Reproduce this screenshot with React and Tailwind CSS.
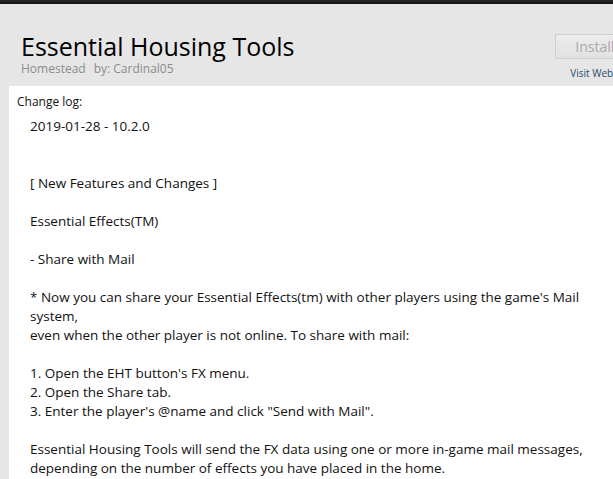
export default function App() {
  const lines = [
    "",
    "",
    "[ New Features and Changes ]",
    "",
    "Essential Effects(TM)",
    "",
    "- Share with Mail",
    "",
    "* Now you can share your Essential Effects(tm) with other players using the game's Mail system,",
    "even when the other player is not online. To share with mail:",
    "",
    "1. Open the EHT button's FX menu.",
    "2. Open the Share tab.",
    "3. Enter the player's @name and click \"Send with Mail\".",
    "",
    "Essential Housing Tools will send the FX data using one or more in-game mail messages,",
    "depending on the number of effects you have placed in the home.",
  ];
  return (
    <div className="w-[613px] h-[479px] overflow-hidden bg-[#e6e6e6] flex flex-col" style={{ fontFamily: '"Open Sans", sans-serif' }}>
      <div className="h-[4px] shrink-0 bg-gradient-to-b from-[#2a2a2a] to-[#111]" />
      <div className="flex shrink-0 h-[82px]">
        <div className="w-[555px] shrink-0 pl-[21px] pt-[28px]">
          <div className="text-[25px] leading-[29px] text-black">Essential Housing Tools</div>
          <div className="text-[12px] leading-[16px] text-[#8c8c8c] flex gap-[8px]">
            <span>Homestead</span>
            <span>by: Cardinal05</span>
          </div>
        </div>
        <div className="w-[90px] shrink-0 pt-[30px] flex flex-col items-center">
          <div className="w-[90px] h-[25px] border border-[#cfcfcf] bg-gradient-to-b from-[#ececec] to-[#e2e2e2] text-[14px] text-[#ababab] flex items-center justify-center pl-[6px]">
            Installed
          </div>
          <div className="text-[10px] leading-[12px] mt-[8px] text-[#2b4a6b]">Visit Website</div>
        </div>
      </div>
      <div className="flex-1 ml-[9px] bg-white pt-[8px] pl-[8px]">
        <div className="text-[12px] leading-[16px] text-[#111]">Change log:</div>
        <div className="pl-[13px] pt-[7px] w-[590px] text-[13.5px] leading-[19px] text-[#111]">
          <div>2019-01-28 - 10.2.0</div>
          {lines.map((l, i) => (
            <div key={i} className="min-h-[19px]">{l}</div>
          ))}
        </div>
      </div>
    </div>
  );
}
